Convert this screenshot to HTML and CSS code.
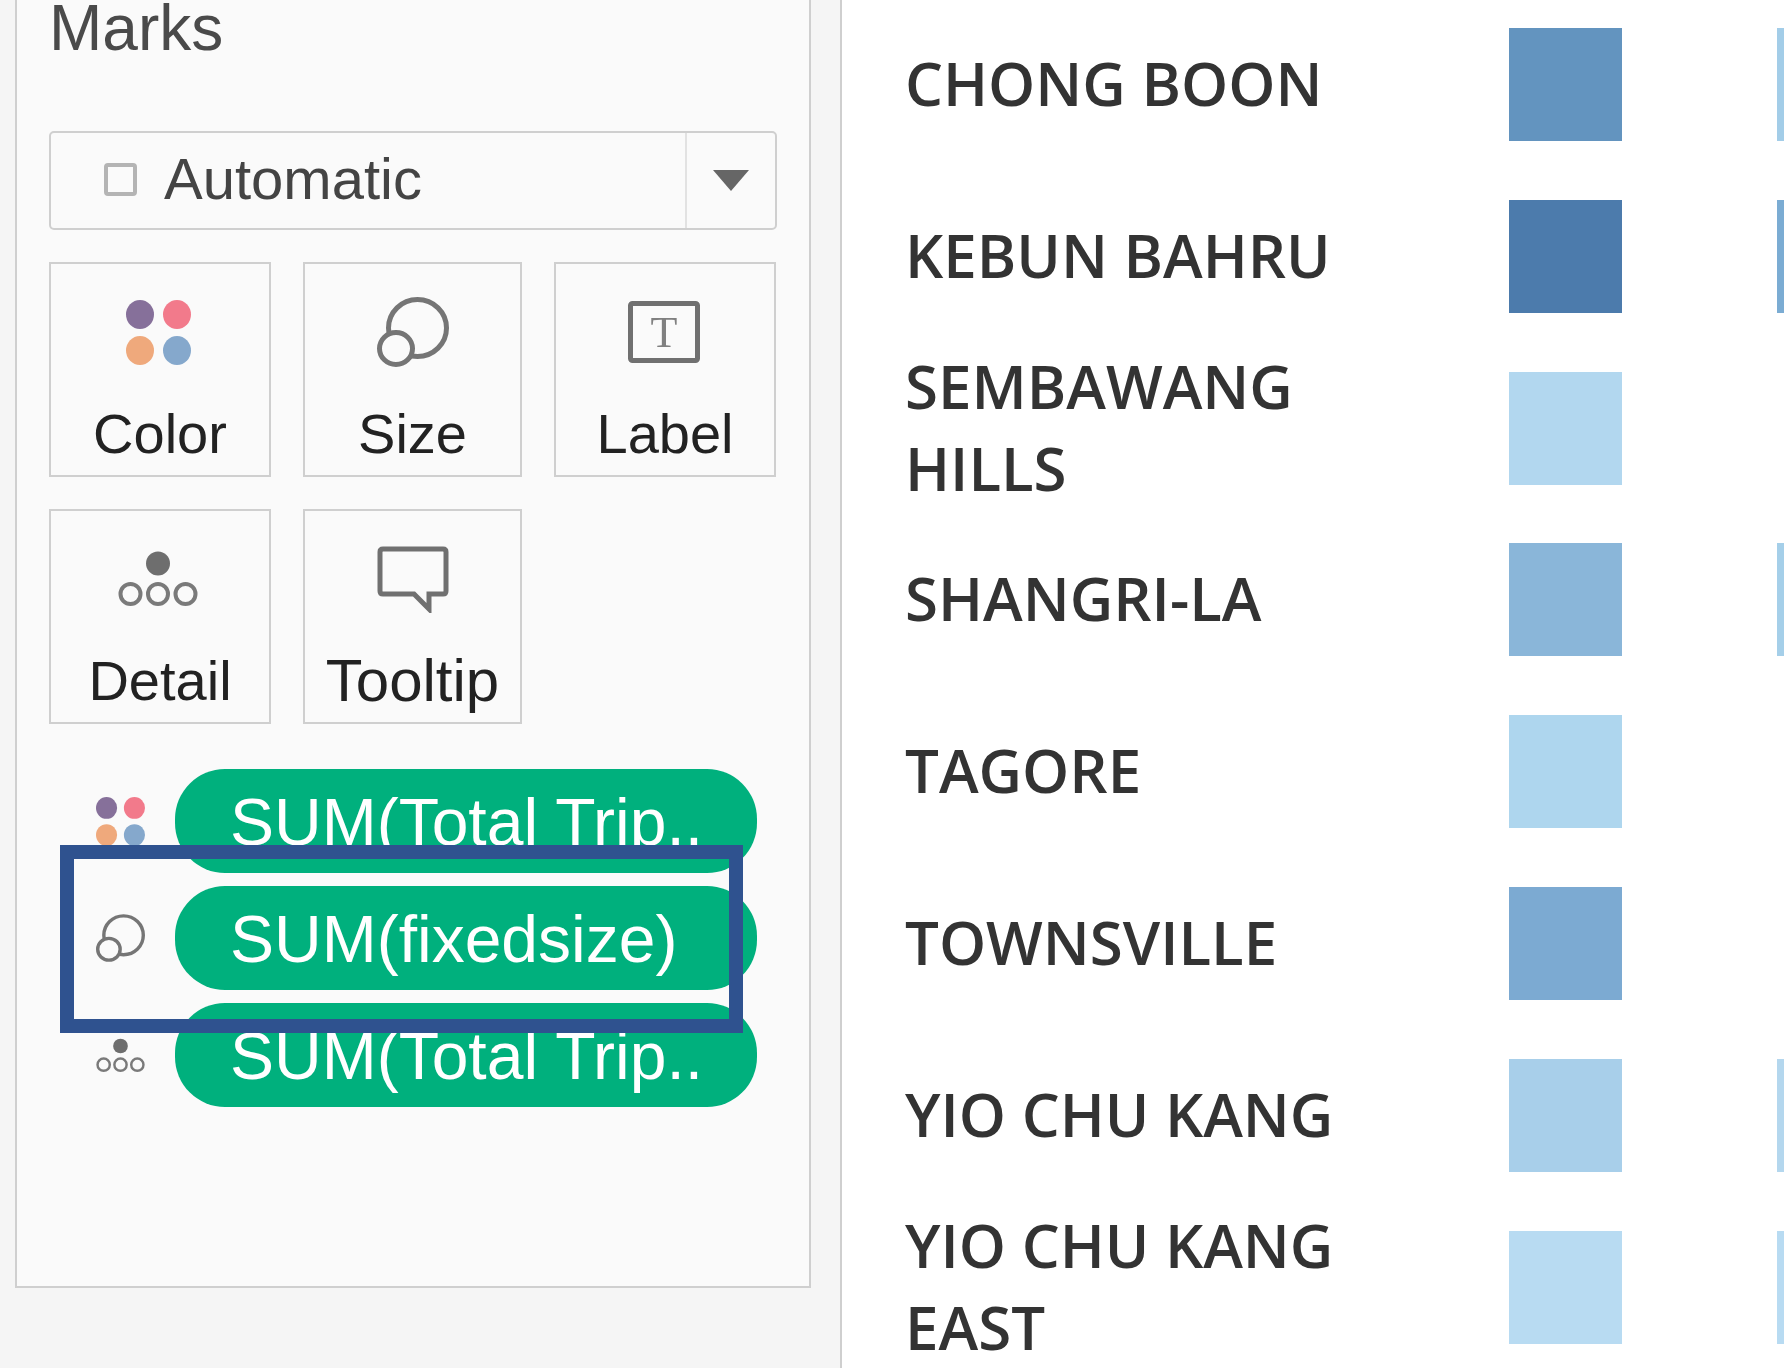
FILE: index.html
```html
<!DOCTYPE html>
<html lang="en">
<head>
  <meta charset="UTF-8">
  <title>Marks</title>
  <link rel="stylesheet" href="styles.css">
</head>
<body>

  <!-- Icon shapes, used by the cards and by the pill rows -->
  <svg class="icon-defs" aria-hidden="true">
    <symbol id="i-color" viewBox="0 0 65 65">
      <ellipse cx="14" cy="14.5" rx="14" ry="14.5" fill="#86709a"/>
      <ellipse cx="51" cy="14.5" rx="14" ry="14.5" fill="#f27a8b"/>
      <ellipse cx="14" cy="50.5" rx="14" ry="14.5" fill="#efa97c"/>
      <ellipse cx="51" cy="50.5" rx="14" ry="14.5" fill="#85a8cc"/>
    </symbol>
    <symbol id="i-size" viewBox="0 0 72 70">
      <ellipse cx="40.5" cy="31" rx="29" ry="28.5" fill="none" stroke="#757575" stroke-width="5"/>
      <ellipse cx="19" cy="51.5" rx="16.5" ry="16" fill="#fafafa" stroke="#757575" stroke-width="5"/>
    </symbol>
    <symbol id="i-detail" viewBox="0 0 80 56">
      <ellipse cx="40" cy="12.5" rx="12" ry="12" fill="#6e6e6e"/>
      <ellipse cx="12.5" cy="43" rx="10" ry="10" fill="none" stroke="#7a7a7a" stroke-width="4"/>
      <ellipse cx="40" cy="43" rx="10" ry="10" fill="none" stroke="#7a7a7a" stroke-width="4"/>
      <ellipse cx="67.5" cy="43" rx="10" ry="10" fill="none" stroke="#7a7a7a" stroke-width="4"/>
    </symbol>
  </svg>

  <div class="page">

    <!-- Marks card -->
    <aside class="sidebar">
      <div class="panel">
        <h2 class="panel-title">Marks</h2>

        <div class="dropdown">
          <span class="mark-square"></span>
          <span class="dropdown-text">Automatic</span>
          <span class="dropdown-arrow"><span class="arrow"></span></span>
        </div>

        <div class="cards">
          <div class="card">
            <div class="card-icon"><svg class="icon-color"><use href="#i-color"/></svg></div>
            <div class="card-label">Color</div>
          </div>
          <div class="card">
            <div class="card-icon"><svg class="icon-size"><use href="#i-size"/></svg></div>
            <div class="card-label">Size</div>
          </div>
          <div class="card">
            <div class="card-icon">
              <svg class="icon-label" viewBox="0 0 72 62">
                <rect x="2.5" y="2.5" width="67" height="57" rx="2" fill="none" stroke="#707070" stroke-width="5"/>
                <text x="36" y="46" text-anchor="middle" class="icon-t">T</text>
              </svg>
            </div>
            <div class="card-label">Label</div>
          </div>
          <div class="card">
            <div class="card-icon"><svg class="icon-detail"><use href="#i-detail"/></svg></div>
            <div class="card-label">Detail</div>
          </div>
          <div class="card">
            <div class="card-icon">
              <svg class="icon-tooltip" viewBox="0 0 72 67">
                <path d="M6 3H66Q69 3 69 6V45Q69 48 66 48H52V63L37 48H6Q3 48 3 45V6Q3 3 6 3Z" fill="none" stroke="#707070" stroke-width="5"/>
              </svg>
            </div>
            <div class="card-label card-label-wide">Tooltip</div>
          </div>
        </div>

        <div class="pills">
          <div class="pill-row">
            <svg class="pill-dots"><use href="#i-color"/></svg>
            <div class="pill">SUM(Total Trip..</div>
          </div>
          <div class="pill-row">
            <svg class="pill-size"><use href="#i-size"/></svg>
            <div class="pill">SUM(fixedsize)</div>
          </div>
          <div class="pill-row">
            <svg class="pill-detail"><use href="#i-detail"/></svg>
            <div class="pill">SUM(Total Trip..</div>
          </div>
        </div>
      </div>

      <!-- Highlight box drawn over the screenshot -->
      <div class="highlight"></div>
    </aside>

    <!-- Heatmap rows -->
    <main class="rows">
      <div class="row">
        <div class="row-name">CHONG BOON</div>
        <div class="swatch" style="background:#6394bf"></div>
        <div class="swatch" style="background:#a3cde8"></div>
      </div>
      <div class="row">
        <div class="row-name">KEBUN BAHRU</div>
        <div class="swatch" style="background:#4c7bac"></div>
        <div class="swatch" style="background:#7bacd3"></div>
      </div>
      <div class="row">
        <div class="row-name">SEMBAWANG HILLS</div>
        <div class="swatch" style="background:#b2d7ef"></div>
      </div>
      <div class="row">
        <div class="row-name">SHANGRI-LA</div>
        <div class="swatch" style="background:#8ab6d9"></div>
        <div class="swatch" style="background:#a5cfe9"></div>
      </div>
      <div class="row">
        <div class="row-name">TAGORE</div>
        <div class="swatch" style="background:#aed6ee"></div>
      </div>
      <div class="row">
        <div class="row-name">TOWNSVILLE</div>
        <div class="swatch" style="background:#7caad2"></div>
      </div>
      <div class="row">
        <div class="row-name">YIO CHU KANG</div>
        <div class="swatch" style="background:#a8cfea"></div>
        <div class="swatch" style="background:#b4d7ee"></div>
      </div>
      <div class="row">
        <div class="row-name">YIO CHU KANG EAST</div>
        <div class="swatch" style="background:#b8dbf2"></div>
        <div class="swatch" style="background:#b8dbf2"></div>
      </div>
    </main>

  </div>

</body>
</html>
```

FILE: styles.css
```css
:root {
  --side-bg: #f5f5f5;
  --panel-bg: #fafafa;
  --line: #cfcfcf;
  --pill: #00b07d;
  --box: #2f528f;
}

html, body {
  margin: 0;
  height: 100%;
  overflow: hidden;
  background: #ffffff;
  font-family: "Liberation Sans", Arial, sans-serif;
}

.icon-defs {
  display: none;
}

/* The source is an enlarged screenshot, so everything is a little soft */
.page {
  display: flex;
  height: 1368px;
  overflow: hidden;
  filter: blur(0.6px);
}

/* Sidebar */
.sidebar {
  position: relative;
  flex: none;
  box-sizing: border-box;
  width: 842px;
  height: 100%;
  padding-left: 15px;
  background: var(--side-bg);
  border-right: 2px solid var(--line);
}

.panel {
  box-sizing: border-box;
  width: 796px;
  height: 1288px;
  padding-left: 32px;
  background: var(--panel-bg);
  border: 2px solid var(--line);
  border-top: none;
}

.panel-title {
  margin: 0;
  font-size: 64px;
  font-weight: normal;
  line-height: 57px;
  color: #4a4a4a;
}

/* Dropdown */
.dropdown {
  display: flex;
  align-items: center;
  box-sizing: border-box;
  width: 728px;
  height: 99px;
  margin-top: 74px;
  padding-left: 53px;
  border: 2px solid var(--line);
  border-radius: 5px;
}

.mark-square {
  box-sizing: border-box;
  width: 33px;
  height: 33px;
  margin-bottom: 3px;
  border: 4px solid #b4b4b4;
  border-radius: 4px;
}

.dropdown-text {
  margin-left: 27px;
  padding-bottom: 5px;
  font-size: 58px;
  color: #444;
}

.dropdown-arrow {
  display: flex;
  align-items: center;
  justify-content: center;
  align-self: stretch;
  width: 88px;
  margin-left: auto;
  border-left: 2px solid #e2e2e2;
}

.arrow {
  width: 0;
  height: 0;
  border-left: 18px solid transparent;
  border-right: 18px solid transparent;
  border-top: 21px solid #666;
}

/* Cards */
.cards {
  display: grid;
  grid-template-columns: 222px 219px 222px;
  grid-auto-rows: 215px;
  column-gap: 32px;
  row-gap: 32px;
  margin-top: 32px;
}

.card {
  box-sizing: border-box;
  padding-top: 28px;
  border: 2px solid var(--line);
  text-align: center;
}

.card-icon {
  display: flex;
  align-items: center;
  justify-content: center;
  height: 80px;
}

.card-label {
  margin-top: 32px;
  font-size: 56px;
  line-height: 60px;
  color: #222;
}

.card-label-wide {
  font-size: 60px;
}

.icon-color { width: 65px; height: 65px; margin-right: 4px; }
.icon-size { width: 72px; height: 70px; }
.icon-label { width: 72px; height: 62px; margin-right: 2px; }
.icon-detail { width: 80px; height: 56px; margin-right: 4px; }
.icon-tooltip { width: 72px; height: 67px; }

.icon-t {
  font-family: "Liberation Serif", serif;
  font-size: 44px;
  fill: #808080;
}

/* Pills */
.pills {
  display: flex;
  flex-direction: column;
  gap: 13px;
  margin-top: 45px;
}

.pill-row {
  display: flex;
  align-items: center;
  height: 104px;
}

.pill-row svg {
  flex: none;
  width: 49px;
  margin-left: 47px;
}

.pill-dots { height: 49px; }
.pill-size { height: 48px; }
.pill-detail { height: 35px; }

.pill {
  box-sizing: border-box;
  width: 582px;
  height: 104px;
  margin-left: 30px;
  padding-left: 55px;
  border-radius: 50px;
  background: var(--pill);
  color: #ffffff;
  font-size: 66px;
  line-height: 107px;
  white-space: nowrap;
}

.highlight {
  position: absolute;
  left: 60px;
  top: 845px;
  box-sizing: border-box;
  width: 683px;
  height: 188px;
  border: 14px solid var(--box);
}

/* Heatmap rows */
.rows {
  display: flex;
  flex-direction: column;
  gap: 58.8px;
  flex: 1;
  min-width: 0;
  padding: 28px 0 0 63px;
}

.row {
  display: flex;
  align-items: center;
  flex: none;
  height: 113px;
}

.row-name {
  flex: none;
  width: 480px;
  margin-right: 124px;
  padding-bottom: 3px;
  font-family: "Open Sans", sans-serif;
  font-weight: 600;
  font-size: 60px;
  line-height: 82px;
  color: #333;
}

.swatch {
  flex: none;
  width: 113px;
  height: 113px;
  margin-right: 155px;
}
```
